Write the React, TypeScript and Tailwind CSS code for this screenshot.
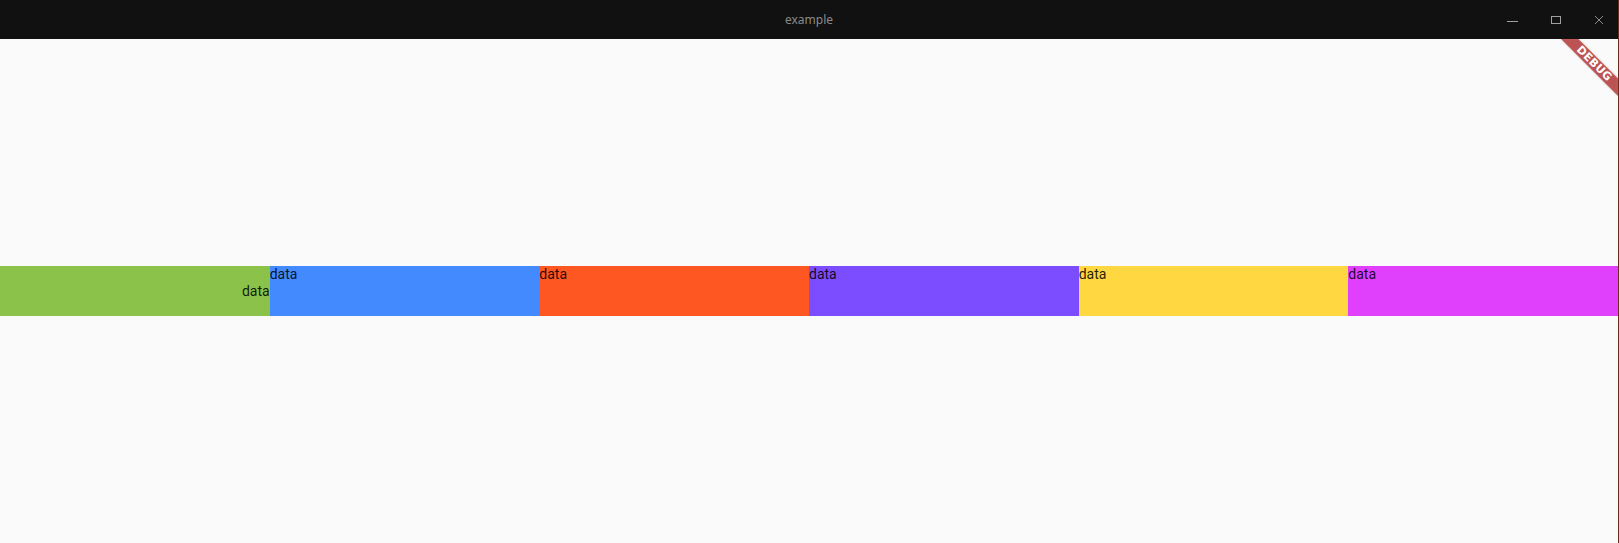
import React from "react";

const cells = [
  { color: "bg-[#8bc34a]", align: "items-center justify-end" },
  { color: "bg-[#448aff]", align: "items-start justify-start" },
  { color: "bg-[#ff5722]", align: "items-start justify-start" },
  { color: "bg-[#7c4dff]", align: "items-start justify-start" },
  { color: "bg-[#ffd740]", align: "items-start justify-start" },
  { color: "bg-[#e040fb]", align: "items-start justify-start" },
];

function TitleBar() {
  return (
    <div className="relative flex h-[39px] items-center justify-center bg-[#111111]">
      <span className="font-['Noto_Sans',sans-serif] text-[12px] text-[#8a8a8a]">
        example
      </span>
      <div className="absolute right-[-2px] top-0 flex h-full items-center">
        <div className="flex h-full w-[43px] items-center justify-center">
          <svg width="11" height="10" viewBox="0 0 11 10">
            <path d="M0 6.5h11" stroke="#a0a0a0" strokeWidth="1" />
          </svg>
        </div>
        <div className="flex h-full w-[43px] items-center justify-center">
          <svg width="10" height="10" viewBox="0 0 10 10">
            <rect x="0.5" y="1.5" width="9" height="7" fill="none" stroke="#a0a0a0" strokeWidth="1" />
          </svg>
        </div>
        <div className="flex h-full w-[43px] items-center justify-center">
          <svg width="10" height="10" viewBox="0 0 10 10">
            <path d="M1 1l8 8M9 1l-8 8" stroke="#8a8a8a" strokeWidth="1" />
          </svg>
        </div>
      </div>
    </div>
  );
}

function DebugBanner() {
  return (
    <div className="pointer-events-none absolute right-0 top-0 h-[60px] w-[60px] overflow-hidden">
      <svg width="60" height="60" viewBox="0 0 60 60" className="absolute inset-0">
        <defs>
          <filter id="sh" x="-20%" y="-20%" width="140%" height="140%">
            <feGaussianBlur stdDeviation="1" />
          </filter>
        </defs>
        <polygon points="3,0 20.4,0 60,39.6 60,57" fill="rgba(0,0,0,0.2)" filter="url(#sh)" />
        <polygon points="3,0 20.4,0 60,39.6 60,57" fill="rgba(183,28,28,0.68)" />
      </svg>
      <div className="absolute left-[36px] top-[24px] flex h-0 w-0 items-center justify-center">
        <span className="rotate-45 whitespace-nowrap font-['DejaVu_Sans',sans-serif] text-[11px] font-black leading-none tracking-[0.3px] text-white">
          DEBUG
        </span>
      </div>
    </div>
  );
}

export default function App() {
  return (
    <div className="flex h-[543px] w-full flex-col border-r border-[#6e2a1c] bg-[#fafafa]">
      <TitleBar />
      <div className="relative flex flex-1 flex-col justify-center">
        <DebugBanner />
        <div className="grid h-[50px] grid-cols-6">
          {cells.map((cell, index) => (
            <div key={index} className={`flex ${cell.color} ${cell.align}`}>
              <span className="font-['Roboto',sans-serif] text-[14px] leading-[16px] text-[rgba(0,0,0,0.87)]">
                data
              </span>
            </div>
          ))}
        </div>
      </div>
    </div>
  );
}
